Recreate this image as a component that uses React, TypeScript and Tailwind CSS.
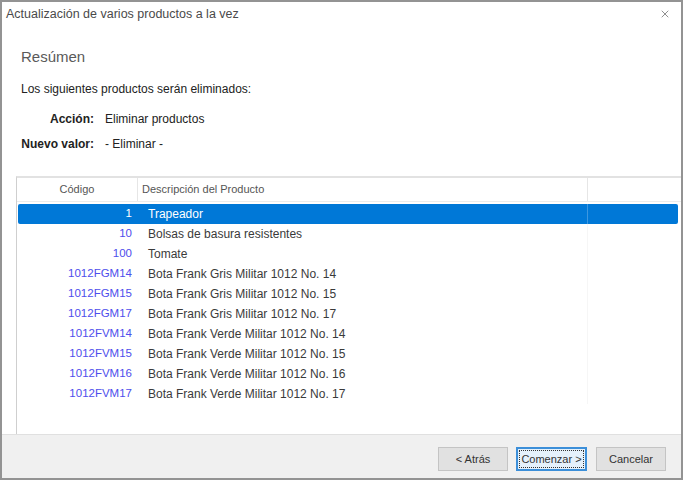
import React from 'react';
import { X } from 'lucide-react';

const ROWS = [
  { code: '1', desc: 'Trapeador' },
  { code: '10', desc: 'Bolsas de basura resistentes' },
  { code: '100', desc: 'Tomate' },
  { code: '1012FGM14', desc: 'Bota Frank Gris Militar 1012 No. 14' },
  { code: '1012FGM15', desc: 'Bota Frank Gris Militar 1012 No. 15' },
  { code: '1012FGM17', desc: 'Bota Frank Gris Militar 1012 No. 17' },
  { code: '1012FVM14', desc: 'Bota Frank Verde Militar 1012 No. 14' },
  { code: '1012FVM15', desc: 'Bota Frank Verde Militar 1012 No. 15' },
  { code: '1012FVM16', desc: 'Bota Frank Verde Militar 1012 No. 16' },
  { code: '1012FVM17', desc: 'Bota Frank Verde Militar 1012 No. 17' },
];

const font = "font-['Liberation_Sans',Arial,sans-serif]";

export default function App() {
  return (
    <div className={`${font} w-[683px] h-[480px] flex flex-col bg-white border-2 border-[#939393] text-[12px] text-[#222]`}>
      {/* Title bar */}
      <div className="h-[24px] shrink-0 flex items-center justify-between pl-[4px] pr-[10px]">
        <span className="text-[12.5px] text-[#4a4a4a]">Actualización de varios productos a la vez</span>
        <X size={12} strokeWidth={1.5} className="text-[#6a6a6a]" />
      </div>

      {/* Summary */}
      <div className="shrink-0 pl-[19px] pt-[21px]">
        <div className="text-[15px] leading-[20px] text-[#5a5a5a]">Resúmen</div>
        <div className="mt-[14px] leading-[16px]">Los siguientes productos serán eliminados:</div>
        <div className="grid grid-cols-[78px_1fr] gap-x-[11px] -ml-[5px] mt-[14px] leading-[16px]">
          <span className="font-bold text-right">Acción:</span>
          <span>Eliminar productos</span>
          <span className="font-bold text-right mt-[9px]">Nuevo valor:</span>
          <span className="mt-[9px]">- Eliminar -</span>
        </div>
      </div>

      {/* List */}
      <div className="flex-1 mt-[24px] ml-[14px] border-l border-t-2 border-[#e2e2e2] border-l-[#cfcfcf] flex flex-col min-h-0">
        <div className="h-[24px] shrink-0 flex items-center text-[11px] text-[#555] border-b border-[#ececec]">
          <div className="w-[121px] text-center border-r border-[#e6e6e6] h-full flex items-center justify-center">Código</div>
          <div className="w-[450px] pl-[4px] border-r border-[#e6e6e6] h-full flex items-center">Descripción del Producto</div>
          <div className="flex-1" />
        </div>
        <div className="pt-[2px]">
          {ROWS.map((r, i) => {
            const sel = i === 0;
            return (
              <div
                key={r.code}
                className={`h-[20px] ml-[1px] mr-[3px] flex items-center rounded-[2px] ${sel ? 'bg-[#0078d7] text-white' : ''}`}
              >
                <div className={`w-[120px] text-right pr-[6px] text-[11.5px] ${sel ? 'text-white' : 'text-[#4e4eec]'}`}>{r.code}</div>
                <div className={`w-[450px] pl-[10px] h-full flex items-center border-r ${sel ? 'border-[#3d97e0] text-white' : 'border-[#f6f6f6] text-[#3a3a3a]'}`}>{r.desc}</div>
                <div className="flex-1" />
              </div>
            );
          })}
        </div>
      </div>

      {/* Footer */}
      <div className="h-[44px] shrink-0 bg-[#f0f0f0] border-t border-[#e0e0e0] flex items-start justify-end pt-[12px] pr-[15px] gap-[8px]">
        <button className="w-[70px] h-[24px] bg-[#e1e1e1] border border-[#c4c4c4] text-[11px] text-[#333]">&lt; Atrás</button>
        <button className="w-[71px] h-[24px] bg-[#e5f1fb] border-2 border-[#3c8fd9] text-[11px] text-[#333] flex items-center justify-center">
          <span className="outline outline-1 outline-dotted outline-[#333] px-[1px]">Comenzar &gt;</span>
        </button>
        <button className="w-[70px] h-[24px] ml-[1px] bg-[#e1e1e1] border border-[#c4c4c4] text-[11px] text-[#333]">Cancelar</button>
      </div>
    </div>
  );
}
